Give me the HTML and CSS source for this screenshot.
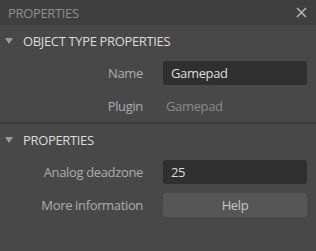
FILE: index.html
```html
<!DOCTYPE html>
<html lang="en">
<head>
    <meta charset="UTF-8">
    <title>Properties</title>
    <link rel="stylesheet" href="styles.css">
</head>
<body>
    <div class="panel">
        <div class="panel-head">
            <span class="panel-title">PROPERTIES</span>
            <svg class="close-icon" width="11" height="11" viewBox="0 0 11 11">
                <path d="M1 1 L10 10 M10 1 L1 10" stroke="#b4b4b4" stroke-width="1.6" fill="none"/>
            </svg>
        </div>

        <div class="section">
            <div class="section-head">
                <span class="arrow"></span>
                <span class="section-title">OBJECT TYPE PROPERTIES</span>
            </div>
            <div class="rows">
                <div class="row">
                    <span class="label">Name</span>
                    <input class="field" type="text" value="Gamepad">
                </div>
                <div class="row">
                    <span class="label">Plugin</span>
                    <span class="plain">Gamepad</span>
                </div>
            </div>
        </div>

        <div class="section">
            <div class="section-head">
                <span class="arrow"></span>
                <span class="section-title">PROPERTIES</span>
            </div>
            <div class="rows">
                <div class="row">
                    <span class="label">Analog deadzone</span>
                    <input class="field" type="text" value="25">
                </div>
                <div class="row">
                    <span class="label">More information</span>
                    <button class="help-btn">Help</button>
                </div>
            </div>
        </div>
    </div>
</body>
</html>
```

FILE: styles.css
```css
* { margin: 0; padding: 0; box-sizing: border-box; }

body { font-family: 'Open Sans', 'Noto Sans', sans-serif; font-size: 13px; letter-spacing: -0.35px; background: #484848; }

.panel { width: 316px; height: 251px; background: #484848; }

.panel-head { height: 25px; background: #3f3f3f; display: flex; align-items: center; justify-content: space-between; padding: 0 9px 0 8px; }

.panel-title { color: #8f8f8f; font-size: 13px; }

.close-icon { display: block; }

.section + .section { border-top: 2px solid #3c3c3c; }

.section-head { height: 31px; display: flex; align-items: center; padding-left: 5px; }

.arrow { width: 0; height: 0; border-left: 4px solid transparent; border-right: 4px solid transparent; border-top: 6px solid #9a9a9a; margin-right: 10px; }

.section-title { color: #dcdcdc; font-size: 13px; }

.rows { display: flex; flex-direction: column; gap: 9px; padding: 5px 9px 4px 0; }

.row { height: 24px; display: grid; grid-template-columns: 143px 1fr; column-gap: 20px; align-items: center; }

.label { color: #a9aeb4; text-align: right; }

.field { height: 24px; width: 100%; background: #2f2f2f; border: none; border-radius: 3px; color: #dedede; font-family: inherit; font-size: 13px; letter-spacing: inherit; padding: 0 8px; outline: none; }

.plain { color: #8a8a8a; padding-left: 3px; }

.help-btn { height: 24px; width: 100%; background: #565656; border: none; border-radius: 3px; color: #c8c8c8; font-family: inherit; font-size: 13px; letter-spacing: inherit; }
```
